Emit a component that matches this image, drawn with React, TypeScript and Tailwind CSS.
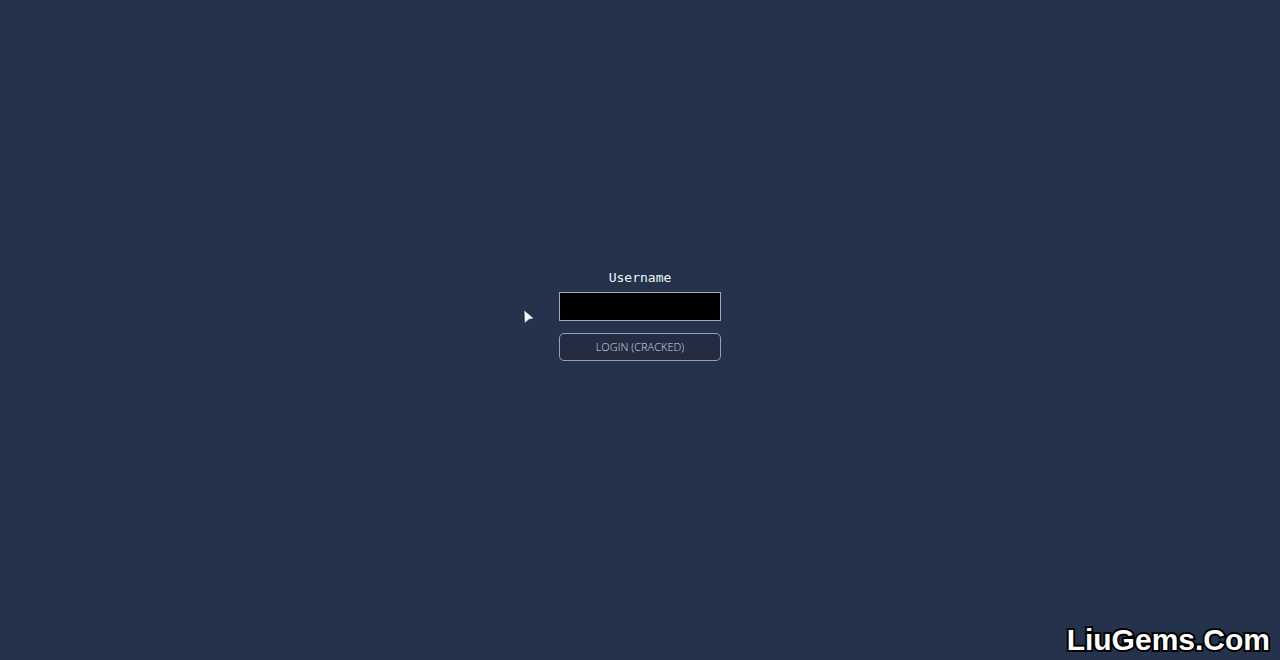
import React, { useState } from "react";
import clsx from "clsx";

const LoginForm = React.memo(function LoginForm({ username, onChange, onLogin }: {
  username: string; onChange: (v: string) => void; onLogin: () => void;
}) {
  return (
    <form onSubmit={(e) => { e.preventDefault(); onLogin(); }} className="relative flex w-[162px] flex-col items-center">
      <label htmlFor="username" className="mb-1 font-['DejaVu_Sans_Mono',monospace] text-[13px] leading-5 text-[#f0f8fa]">
        Username
      </label>
      <input id="username" type="text" value={username} onChange={(e) => onChange(e.target.value)} autoComplete="off"
        className="h-[29px] w-full border border-[#a3a8b2] bg-black px-2 font-['DejaVu_Sans_Mono',monospace] text-[13px] text-white outline-none" />
      <button type="submit"
        className="mt-3 h-7 w-full rounded-[5px] border border-[#96a1b3] bg-[#232c40] font-['Open_Sans',sans-serif] text-[11px] font-light text-[#d3dbe8]">
        LOGIN (CRACKED)
      </button>
      <Pointer className="absolute top-10 -left-9" />
    </form>
  );
});

/* Mouse pointer left of the input */
function Pointer({ className }: { className?: string }) {
  return (
    <svg aria-hidden="true" width="12" height="18" viewBox="0 0 12 18" className={clsx("pointer-events-none", className)}>
      <path d="M1 2 L11 10.5 L6 11.5 L1.5 15.5 Z" fill="#f4fbfc" stroke="#1a2437" strokeWidth="0.6" strokeLinejoin="round" />
    </svg>
  );
}

export default function App() {
  const [username, setUsername] = useState("");
  const handleLogin = () => setUsername((u) => u.trim());

  return (
    <div className="relative flex min-h-screen flex-col bg-[#25324c]">
      <main className="flex flex-1 items-center justify-center pb-[31px]">
        <LoginForm username={username} onChange={setUsername} onLogin={handleLogin} />
      </main>
      <div className="absolute right-2.5 bottom-0 font-['Liberation_Sans',sans-serif] text-[30px] leading-10 font-bold text-white [-webkit-text-stroke:4px_black] [paint-order:stroke_fill]">
        LiuGems.Com
      </div>
    </div>
  );
}
